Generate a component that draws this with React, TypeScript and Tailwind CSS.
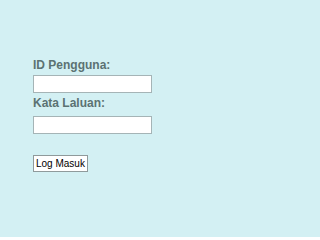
export default function App() {
  return (
    <div className="min-h-[237px] w-full bg-[#d3f0f3] font-['Liberation_Sans',Arial,sans-serif]">
      <form
        className="flex flex-col items-start pl-[33px] pt-[58px]"
        onSubmit={(e) => e.preventDefault()}
      >
        <label className="h-[14px] text-[12px] leading-[14px] font-bold text-[#5b7272]">
          ID Pengguna:
        </label>
        <input
          type="text"
          className="mt-[3px] h-[18px] w-[119px] border border-[#a5b4b6] bg-white outline-none"
        />
        <label className="mt-[3px] h-[14px] text-[12px] leading-[14px] font-bold text-[#5b7272]">
          Kata Laluan:
        </label>
        <input
          type="password"
          className="mt-[6px] h-[18px] w-[119px] border border-[#a5b4b6] bg-white outline-none"
        />
        <button
          type="submit"
          className="mt-[21px] h-[17px] border border-[#8f9a9b] bg-white px-[2px] text-[10px] leading-[15px] text-black"
        >
          Log Masuk
        </button>
      </form>
    </div>
  );
}
